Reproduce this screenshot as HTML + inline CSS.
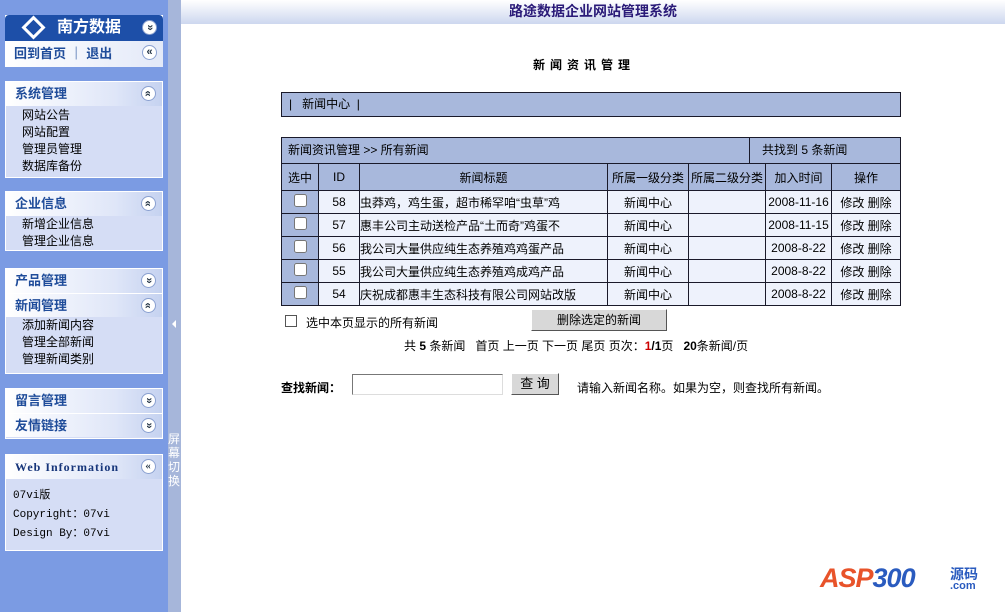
<!DOCTYPE html>
<html><head><meta charset="utf-8"><style>
*{margin:0;padding:0;box-sizing:border-box}
body{width:1005px;height:612px;overflow:hidden;position:relative;background:#fff;font-family:"Liberation Sans","Noto Sans CJK SC",sans-serif;font-size:12px;color:#000}
.abs{position:absolute}
#side{left:0;top:0;width:168px;height:612px;background:#7b9be3}
#strip{left:168px;top:0;width:13px;height:612px;background:#a6b6da}
#top{left:181px;top:0;width:824px;height:24px;background:linear-gradient(#fff,#cdd7ef);text-align:center;font-weight:bold;font-size:14px;color:#2a1a78;line-height:22px}
.pan{position:absolute;left:5px;width:158px;background:#d5ddf5;border:1px solid #fff}
.hd{height:24px;background:linear-gradient(90deg,#fff,#dfe6f8 70%,#c5d2f0);color:#1f4c9a;font-weight:bold;font-size:13px;line-height:24px;padding-left:9px;position:relative}
.ic{position:absolute;right:6px;top:4px;width:15px;height:15px;border-radius:50%;background:#fff;border:1px solid #8aa0d0;font-size:11px;line-height:12px;text-align:center;color:#234;font-weight:bold}
.up{transform:rotate(-90deg)}.dn{transform:rotate(90deg)}
.it{padding-left:16px;line-height:17px;font-size:12px}
table{border-collapse:collapse}
td{border:1px solid #1a1a2a;height:23px;font-size:12px;text-align:center}
</style></head><body>
<div id="side" class="abs"></div>
<div id="strip" class="abs"><div class="abs" style="left:4px;top:320px;width:0;height:0;border-top:4px solid transparent;border-bottom:4px solid transparent;border-right:4px solid #fff"></div>
<div class="abs" style="left:0;top:432px;width:13px;color:#fff;font-size:12px;line-height:14px">屏幕切换</div></div>
<div id="top" class="abs">路途数据企业网站管理系统</div>

<div class="pan" style="top:15px;height:52px;background:#fff;border:0">
<div style="height:26px;background:#1d4fa8;border-radius:4px 4px 0 0;color:#fff;font-weight:bold;font-size:16px;line-height:26px;padding-left:52px;position:relative"><span class="abs" style="left:20px;top:4px;width:17px;height:17px;border:3px solid #fff;transform:rotate(45deg)"></span>南方数据<span class="ic dn" style="top:5px">»</span></div>
<div class="hd" style="height:26px;line-height:26px;background:linear-gradient(90deg,#fff,#e3e9f8)">回到首页 ｜ 退出<span class="ic">«</span></div></div>

<div class="pan" style="top:81px;height:97px"><div class="hd">系统管理<span class="ic up">»</span></div>
<div class="it" style="padding-top:1px">网站公告</div><div class="it">网站配置</div><div class="it">管理员管理</div><div class="it">数据库备份</div></div>

<div class="pan" style="top:191px;height:60px"><div class="hd">企业信息<span class="ic up">»</span></div>
<div class="it">新增企业信息</div><div class="it">管理企业信息</div></div>

<div class="pan" style="top:268px;height:106px"><div class="hd">产品管理<span class="ic dn">»</span></div>
<div class="hd" style="border-top:1px solid #fff">新闻管理<span class="ic up">»</span></div>
<div class="it">添加新闻内容</div><div class="it">管理全部新闻</div><div class="it">管理新闻类别</div></div>

<div class="pan" style="top:388px;height:51px"><div class="hd">留言管理<span class="ic dn">»</span></div>
<div class="hd" style="border-top:1px solid #fff">友情链接<span class="ic dn">»</span></div></div>

<div class="pan" style="top:454px;height:97px"><div class="hd" style="font-family:'Liberation Serif',serif;font-size:12px;letter-spacing:1px;color:#16357a">Web Information<span class="ic">«</span></div>
<div style="padding:8px 0 0 7px;font-family:'Liberation Mono','Noto Sans CJK SC',monospace;font-size:11px;line-height:19px">07vi版<br>Copyright：07vi<br>Design By：07vi</div></div>

<div class="abs" style="left:533px;top:56px;font-weight:bold;letter-spacing:5px;font-size:12px">新闻资讯管理</div>
<div class="abs" style="left:281px;top:92px;width:620px;height:25px;background:#a8b8dc;border:1px solid #1a1a2a;line-height:22px;padding-left:7px">|&nbsp;&nbsp; 新闻中心 &nbsp;|</div>

<div class="abs" style="left:281px;top:137px;width:620px;height:27px;background:#a8b8dc;border:1px solid #1a1a2a;line-height:24px">
<span class="abs" style="left:6px">新闻资讯管理 &gt;&gt; 所有新闻</span>
<span class="abs" style="left:467px;top:0;height:25px;border-left:1px solid #1a1a2a;padding-left:12px">共找到 5 条新闻</span></div>
<table class="abs" style="left:281px;top:163px;width:620px">
<tr style="background:#a8b8dc;height:27px"><td style="width:37px">选中</td><td style="width:41px">ID</td><td style="width:248px">新闻标题</td><td style="width:81px">所属一级分类</td><td style="width:77px">所属二级分类</td><td style="width:66px">加入时间</td><td>操作</td></tr>
<tr style="background:#eef2fc"><td style="background:#a8b8dc"><input type="checkbox" style="width:13px;height:13px"></td><td>58</td><td style="text-align:left">虫莽鸡，鸡生蛋，超市稀罕咱“虫草”鸡</td><td>新闻中心</td><td></td><td>2008-11-16</td><td>修改 删除</td></tr>
<tr style="background:#eef2fc"><td style="background:#a8b8dc"><input type="checkbox" style="width:13px;height:13px"></td><td>57</td><td style="text-align:left">惠丰公司主动送检产品“土而奇”鸡蛋不</td><td>新闻中心</td><td></td><td>2008-11-15</td><td>修改 删除</td></tr>
<tr style="background:#eef2fc"><td style="background:#a8b8dc"><input type="checkbox" style="width:13px;height:13px"></td><td>56</td><td style="text-align:left">我公司大量供应纯生态养殖鸡鸡蛋产品</td><td>新闻中心</td><td></td><td>2008-8-22</td><td>修改 删除</td></tr>
<tr style="background:#eef2fc"><td style="background:#a8b8dc"><input type="checkbox" style="width:13px;height:13px"></td><td>55</td><td style="text-align:left">我公司大量供应纯生态养殖鸡成鸡产品</td><td>新闻中心</td><td></td><td>2008-8-22</td><td>修改 删除</td></tr>
<tr style="background:#eef2fc"><td style="background:#a8b8dc"><input type="checkbox" style="width:13px;height:13px"></td><td>54</td><td style="text-align:left">庆祝成都惠丰生态科技有限公司网站改版</td><td>新闻中心</td><td></td><td>2008-8-22</td><td>修改 删除</td></tr>
</table>

<div class="abs" style="left:285px;top:315px;width:12px;height:12px;border:1px solid #555;background:#fff"></div>
<div class="abs" style="left:306px;top:314px">选中本页显示的所有新闻</div>
<div class="abs" style="left:531px;top:309px;width:136px;height:22px;background:#d8d8d8;border:1px solid;border-color:#fff #555 #555 #fff;text-align:center;line-height:20px">删除选定的新闻</div>
<div class="abs" style="left:404px;top:337px">共 <b>5</b> 条新闻 &nbsp; 首页 上一页 下一页 尾页 页次：<b style="color:#c00">1</b><b>/1</b>页 &nbsp; <b>20</b>条新闻/页</div>
<div class="abs" style="left:281px;top:379px;font-weight:bold">查找新闻：</div>
<div class="abs" style="left:352px;top:374px;width:151px;height:21px;border:1px solid;border-color:#777 #ddd #ddd #777;background:#fff"></div>
<div class="abs" style="left:511px;top:373px;width:48px;height:22px;background:#d8d8d8;border:1px solid;border-color:#fff #555 #555 #fff;text-align:center;line-height:20px;font-size:13px">查 询</div>
<div class="abs" style="left:577px;top:379px">请输入新闻名称。如果为空，则查找所有新闻。</div>

<div class="abs" style="left:820px;top:563px;font:italic bold 27px 'Liberation Sans',sans-serif;color:#e8532a;letter-spacing:-1px">ASP<span style="color:#2a5bbf">300</span></div>
<div class="abs" style="left:950px;top:564px;color:#2a5bbf;font-weight:bold;font-size:14px">源码</div>
<div class="abs" style="left:950px;top:580px;color:#2a5bbf;font-weight:bold;font-size:11px">.com</div>
</body></html>
